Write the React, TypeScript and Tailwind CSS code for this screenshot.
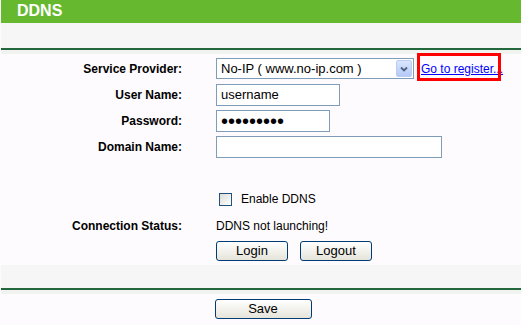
import React from "react";

const font = { fontFamily: '"Liberation Sans", Arial, sans-serif' };

function Label({ children }: { children: React.ReactNode }) {
  return (
    <div className="w-[181px] shrink-0 text-right text-[12px] font-bold leading-[22px] text-black">
      {children}
    </div>
  );
}

function Btn({ children, w }: { children: React.ReactNode; w: string }) {
  return (
    <button
      className={`${w} h-[20px] rounded-[3px] border border-[#003c74] bg-gradient-to-b from-white to-[#e6e4da] text-[13px] leading-[18px] text-black`}
      style={font}
    >
      {children}
    </button>
  );
}

export default function App() {
  return (
    <div className="w-[521px] h-[325px] overflow-hidden bg-[#fdfbfd] pl-[1px]" style={font}>
      <div className="h-[23px] bg-[#66b82f] pl-[16px] text-[16px] font-bold leading-[22px] text-white">
        DDNS
      </div>
      <div className="h-[25px] bg-[#f5f6f5]" />
      <div className="h-[2px] bg-[#22683c]" />
      <div className="h-[4px] bg-[#f1f3f1]" />

      <div className="flex flex-col pt-[4px]">
        <div className="flex h-[26px] items-start gap-[34px]">
          <Label>Service Provider:</Label>
          <div className="flex items-start gap-[7px]">
            <div className="flex h-[21px] w-[198px] items-center border border-[#7f9db9] bg-white pl-[4px]">
              <span className="flex-1 text-[13px] leading-[19px] text-black">No-IP ( www.no-ip.com )</span>
              <div className="mr-[1px] flex h-[17px] w-[16px] items-center justify-center rounded-[2px] border border-[#b9cdf6] bg-gradient-to-b from-[#dbe6fd] to-[#b5c9f6]">
                <svg width="8" height="6" viewBox="0 0 8 6">
                  <path d="M1 1.5 L4 4.5 L7 1.5" fill="none" stroke="#4d6185" strokeWidth="1.8" />
                </svg>
              </div>
            </div>
            <div className="relative mt-[-2px]">
              <a className="text-[12px] leading-[14px] text-[#0000ff] underline" href="#">
                Go to register...
              </a>
              <div className="absolute left-[-4px] top-[-3px] h-[28px] w-[84px] border-[3px] border-[#ff0000]" />
            </div>
          </div>
        </div>

        <div className="flex h-[26px] items-start gap-[34px]">
          <Label>User Name:</Label>
          <div className="flex h-[22px] w-[124px] items-center border border-[#7f9db9] bg-white pl-[4px] text-[13px] text-black">
            username
          </div>
        </div>

        <div className="flex h-[26px] items-start gap-[34px]">
          <Label>Password:</Label>
          <div className="flex h-[22px] w-[114px] items-center border border-[#7f9db9] bg-white pl-[4px] text-[20px] leading-[20px] text-black">
            •••••••••
          </div>
        </div>

        <div className="flex h-[26px] items-start gap-[34px]">
          <Label>Domain Name:</Label>
          <div className="h-[22px] w-[226px] border border-[#7f9db9] bg-white" />
        </div>

        <div className="h-[26px]" />

        <div className="flex h-[22px] items-center gap-[34px]">
          <div className="w-[181px] shrink-0" />
          <div className="flex items-center gap-[9px] pl-[3px]">
            <div className="h-[13px] w-[13px] border border-[#1c5180] bg-gradient-to-br from-[#dcdcd7] to-white" />
            <span className="text-[12px] leading-[14px] text-black">Enable DDNS</span>
          </div>
        </div>

        <div className="flex h-[31px] items-center gap-[34px]">
          <Label>Connection Status:</Label>
          <span className="text-[12px] text-black">DDNS not launching!</span>
        </div>

        <div className="flex h-[20px] items-center gap-[34px]">
          <div className="w-[181px] shrink-0" />
          <div className="flex gap-[12px]">
            <Btn w="w-[72px]">Login</Btn>
            <Btn w="w-[72px]">Logout</Btn>
          </div>
        </div>
      </div>

      <div className="mt-[4px] h-[23px] bg-[#f5f6f5]" />
      <div className="h-[2px] bg-[#22683c]" />
      <div className="h-[4px] bg-[#f1f3f1]" />
      <div className="flex justify-center pl-[4px] pt-[5px]">
        <Btn w="w-[97px]">Save</Btn>
      </div>
    </div>
  );
}
